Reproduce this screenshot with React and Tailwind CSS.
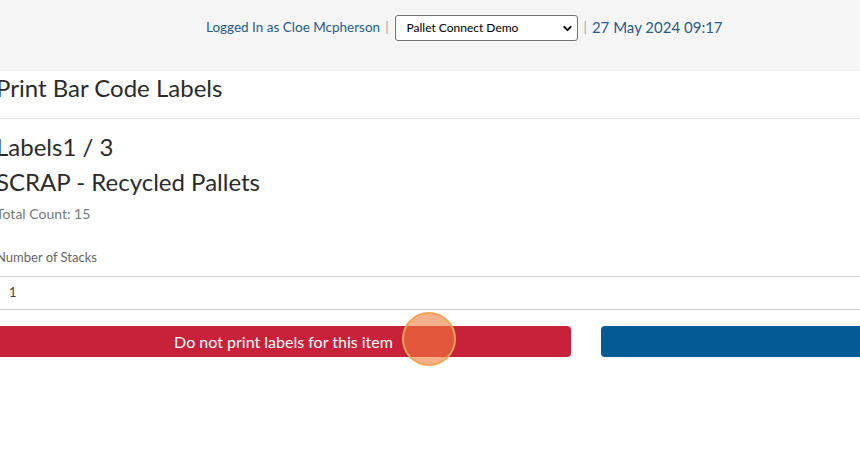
import { ChevronDown } from 'lucide-react';

const App = () => {
    return (
        <div className="w-[860px] h-[469px] overflow-hidden bg-white font-['Lato',sans-serif]">
            {/* Top bar */}
            <div className="h-[71px] bg-[#f5f5f5] flex items-start pt-[15px] pl-[206px] text-[13.5px] text-[#2a5b86]">
                <span className="leading-[24px]">Logged In as Cloe Mcpherson</span>
                <span className="leading-[24px] text-[#9aa5b1] ml-[5px] mr-[6px]">|</span>
                <div className="relative w-[183px] h-[26px] bg-white border border-[#767676] rounded-[3px] flex items-center pl-[11px] text-[12px] text-black">
                    Pallet Connect Demo
                    <ChevronDown size={13} strokeWidth={3.5} className="absolute right-[3px] top-[6px]" />
                </div>
                <span className="leading-[24px] text-[#9aa5b1] ml-[6px] mr-[5px]">|</span>
                <span className="leading-[24px] text-[15px]">27 May 2024 09:17</span>
            </div>

            {/* Content */}
            <div className="w-[1180px] -ml-[4px] text-[#2b2b2b]">
                <div className="h-[48px] flex items-start pt-[3px] border-b border-[#e2e2e2]">
                    <h1 className="text-[24px] leading-[28px]">Print Bar Code Labels</h1>
                </div>
                <div className="pt-[13px]">
                    <div className="text-[24px] leading-[30px]">Labels1 / 3</div>
                    <div className="text-[24px] leading-[40px]">SCRAP - Recycled Pallets</div>
                    <div className="text-[14px] leading-[24px] text-[#777]">Total Count: 15</div>
                    <div className="text-[13px] leading-[20px] text-[#666] mt-[21px]">Number of Stacks</div>
                    <div className="mt-[9px] h-[34px] border-y border-[#cfcfcf] flex items-center pl-[13px] text-[13px] text-[#444]">
                        1
                    </div>
                    <div className="mt-[16px] grid grid-cols-2 gap-[30px]">
                        <div className="relative h-[31px] bg-[#c8223a] rounded-[4px] flex items-center justify-center text-white text-[16px]">
                            Do not print labels for this item
                            <span className="absolute left-[406px] top-[-14px] w-[54px] h-[54px] rounded-full bg-[#f37b3c]/60 border-2 border-[#f5a256]" />
                        </div>
                        <div className="h-[31px] bg-[#045a95] rounded-[4px]" />
                    </div>
                </div>
            </div>
        </div>
    );
};

export default App;
